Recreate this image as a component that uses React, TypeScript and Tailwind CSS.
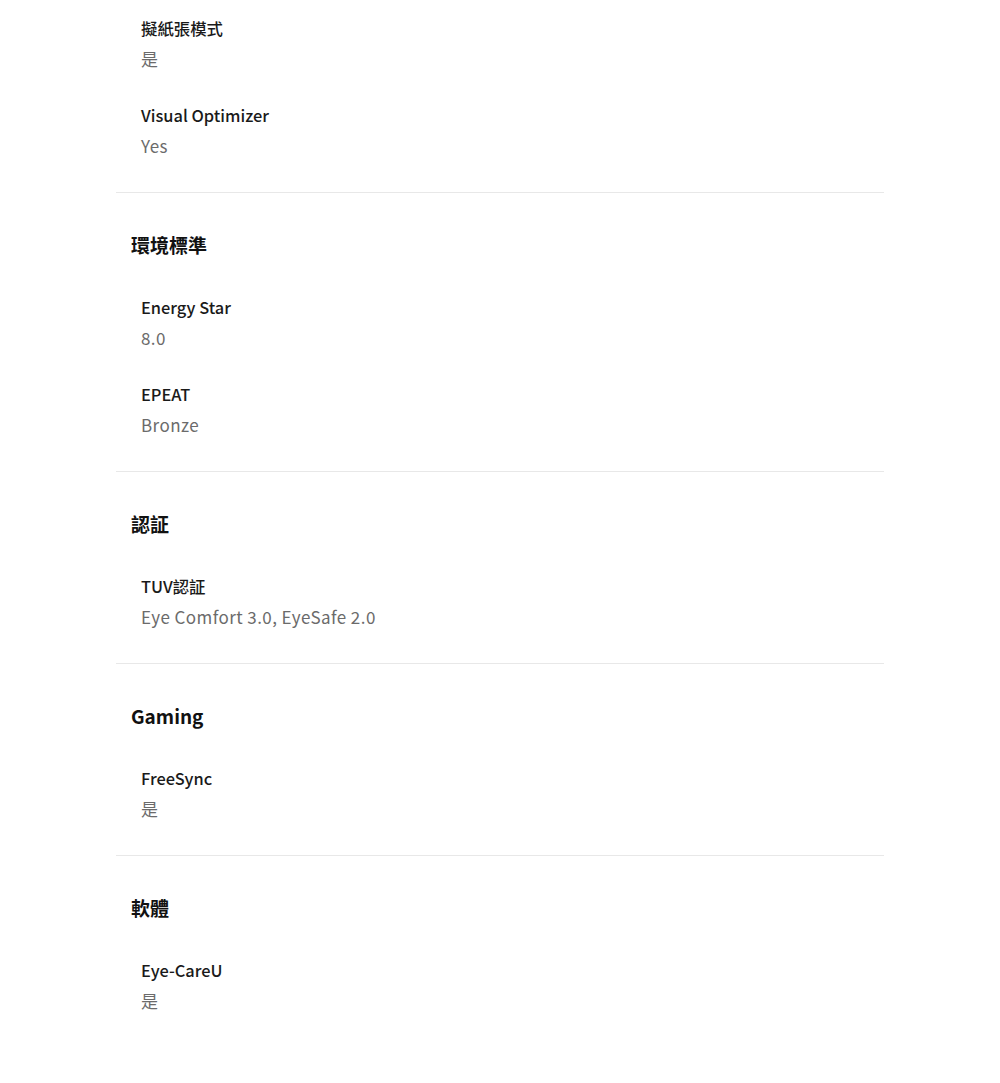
const sections: { title?: string; items: { label: string; value: string }[] }[] = [
  {
    items: [
      { label: "擬紙張模式", value: "是" },
      { label: "Visual Optimizer", value: "Yes" },
    ],
  },
  {
    title: "環境標準",
    items: [
      { label: "Energy Star", value: "8.0" },
      { label: "EPEAT", value: "Bronze" },
    ],
  },
  {
    title: "認証",
    items: [{ label: "TUV認証", value: "Eye Comfort 3.0, EyeSafe 2.0" }],
  },
  {
    title: "Gaming",
    items: [{ label: "FreeSync", value: "是" }],
  },
  {
    title: "軟體",
    items: [{ label: "Eye-CareU", value: "是" }],
  },
];

export default function App() {
  return (
    <div
      className="min-h-[1083px] bg-white"
      style={{ fontFamily: '"Noto Sans CJK TC", "Noto Sans", sans-serif' }}
    >
      <div className="mx-auto w-[768px]">
        {sections.map((s, i) => (
          <section
            key={i}
            className={`${i > 0 ? "border-t border-[#e8e8e8] pt-[37px]" : "pt-[15px]"} pb-[33px]`}
          >
            {s.title && (
              <h2 className="mb-[34px] pl-[15px] text-[19px] font-bold leading-[30px] text-[#111]">
                {s.title}
              </h2>
            )}
            <div className="flex flex-col gap-[30px] pl-[25px]">
              {s.items.map((it) => (
                <div key={it.label}>
                  <div className="text-[16.4px] font-medium leading-[26px] text-[#1a1a1a]">
                    {it.label}
                  </div>
                  <div className="mt-[5px] text-[17px] leading-[26px] tracking-[0.025em] text-[#6b6b6b]">
                    {it.value}
                  </div>
                </div>
              ))}
            </div>
          </section>
        ))}
      </div>
    </div>
  );
}
